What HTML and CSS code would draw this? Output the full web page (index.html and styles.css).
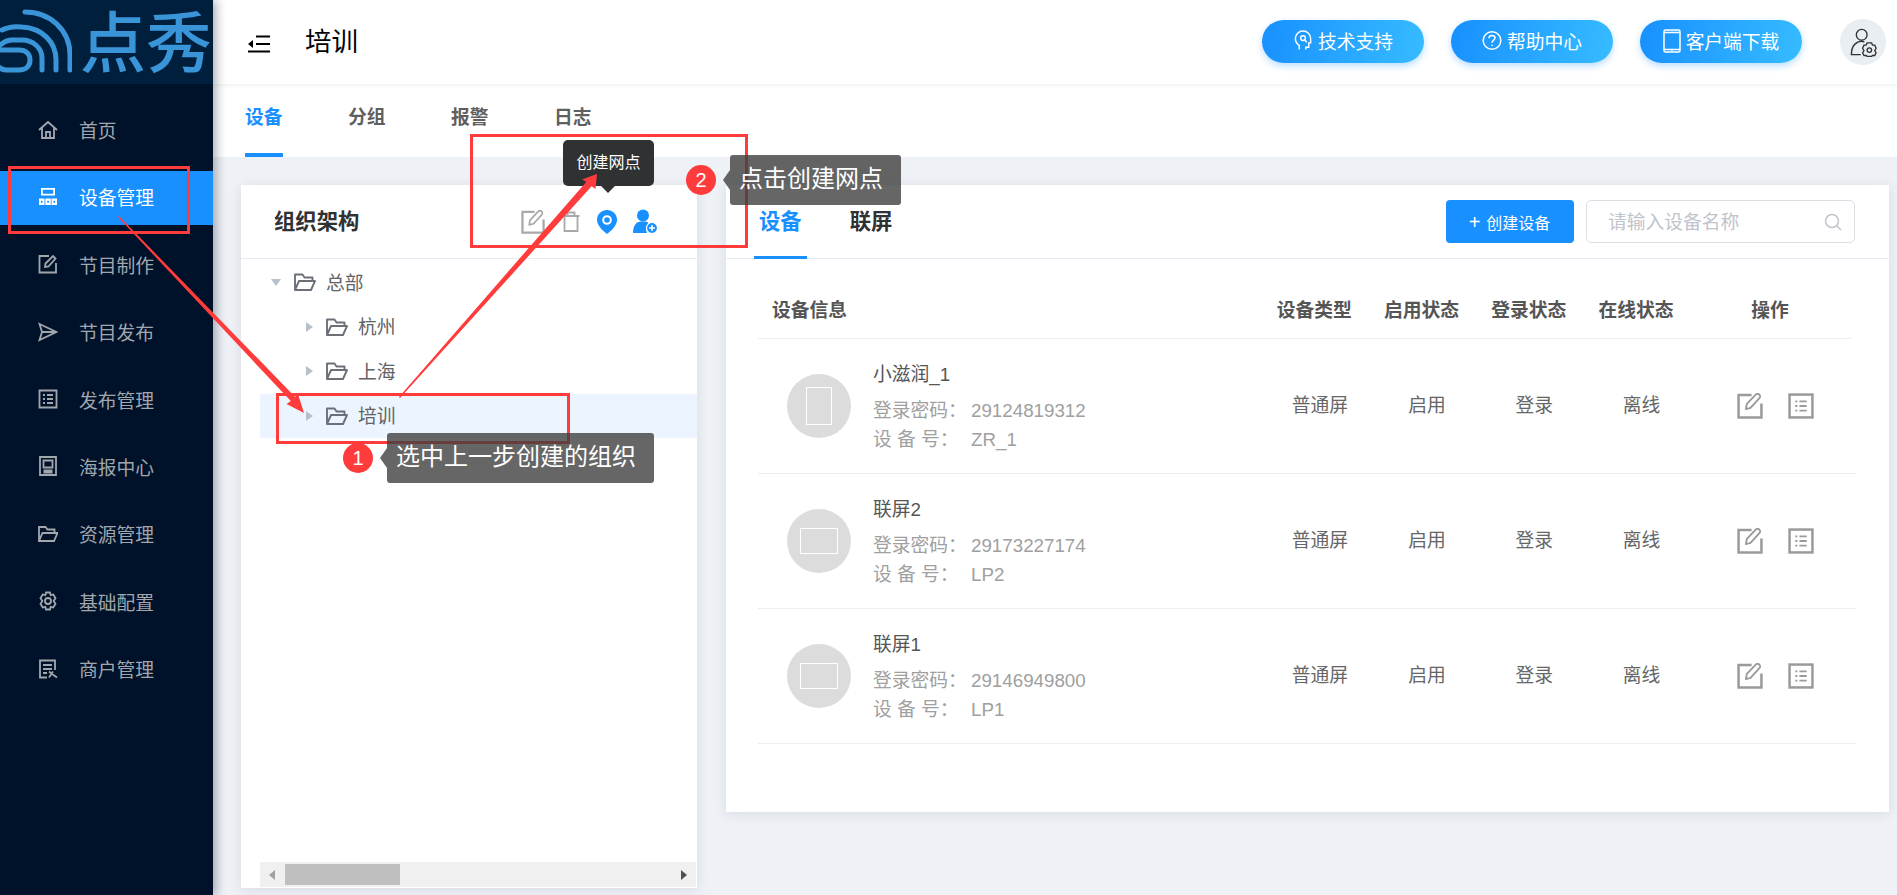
FILE: index.html
```html
<!DOCTYPE html>
<html lang="zh-CN">
<head>
  <meta charset="UTF-8">
  <title>点秀 - 设备管理</title>
  <link rel="stylesheet" href="styles.css">
</head>
<body>
  <svg class="defs" aria-hidden="true">
    <symbol id="i-edit" viewBox="0 0 25 25">
      <path d="M14 2H1.500V23.500H23.500V10" fill="none" stroke="currentColor" stroke-width="2.400"/>
      <path d="M8.500 15.500L9.500 10.500L18 1.500C19 .5 20.500 .5 21.500 1.500C22.500 2.500 22.500 4 21.500 5L13 14.300Z" fill="none" stroke="currentColor" stroke-width="1.800" stroke-linejoin="round"/>
    </symbol>
    <symbol id="i-list" viewBox="0 0 25 25">
      <rect x="1.500" y="1.500" width="22" height="22" fill="none" stroke="currentColor" stroke-width="2.400"/>
      <path d="M7 8h2M7 12.500h2M7 17h2M11 8h7M11 12.500h7M11 17h7" stroke="currentColor" stroke-width="1.700"/>
    </symbol>
    <symbol id="i-folder" viewBox="0 0 22 18">
      <path d="M1 17V1.500H8.500L10.500 4.500H18.500V8M1 17L5 8H21L17 17Z" fill="none" stroke="currentColor" stroke-width="1.900" stroke-linejoin="round"/>
    </symbol>
  </svg>

  <aside class="sidebar">
    <div class="logo">
      <svg class="logo-mark" viewBox="0 0 72 84">
        <g fill="none" stroke="#3a95d8" stroke-width="5" stroke-linecap="round">
          <path d="M25 12C50 12 70 30 70 55V70"/>
          <path d="M2 30C8 27 14 26 22 27C42 28 56 42 56 60V70"/>
          <path d="M42 70V58C42 48 33 40 22 40H12C6 40 2 43 -2 47"/>
          <path d="M1 50H19C26 50 30 54 30 60C30 66 26 70 19 70H6C2 70 0 68 -3 66"/>
        </g>
      </svg>
      <span class="logo-text">点秀</span>
    </div>
    <nav class="menu">
      <a class="menu-item">
        <svg class="menu-icon" viewBox="0 0 20 20"><path d="M1 10L10 2L19 10M4 8V18H16V8M8 18V12H12V18"/></svg>
        <span>首页</span>
      </a>
      <a class="menu-item active">
        <svg class="menu-icon solid" viewBox="0 0 20 20"><path d="M3 1h14v7.500H3zM4.800 2.800v3.900h10.400V2.800zM1 11.500h5.500V18H1zM3 13.800v2h1.500v-2zM7.300 11.500h5.500V18H7.300zM9.300 13.800v2h1.500v-2zM13.500 11.500H19V18h-5.500zM15.500 13.800v2H17v-2z"/></svg>
        <span>设备管理</span>
      </a>
      <a class="menu-item">
        <svg class="menu-icon" viewBox="0 0 20 20"><path d="M11 2H1.500V18.500H18V9M7 13L7.500 9.500L15 2L17.500 4.500L10.500 12.500Z"/></svg>
        <span>节目制作</span>
      </a>
      <a class="menu-item">
        <svg class="menu-icon" viewBox="0 0 20 20"><path d="M1.500 2L18.500 10L1.500 18L4 10ZM4 10H18.500"/></svg>
        <span>节目发布</span>
      </a>
      <a class="menu-item">
        <svg class="menu-icon" viewBox="0 0 20 20"><path d="M1.500 1.500H18.500V18.500H1.500ZM5 6h2M5 10h2M5 14h2M9 6h6M9 10h6M9 14h6"/></svg>
        <span>发布管理</span>
      </a>
      <a class="menu-item">
        <svg class="menu-icon" viewBox="0 0 20 20"><path d="M2 1H18V19H2ZM5.500 4.500H14.500V11.500H5.500ZM5.500 14.500H14.500M5.500 16.500H14.500"/></svg>
        <span>海报中心</span>
      </a>
      <a class="menu-item">
        <svg class="menu-icon" viewBox="0 0 20 20"><path d="M1 17V3H7.500L9.500 5.500H16.500V9M1 17L4.500 9H19.500L16 17Z"/></svg>
        <span>资源管理</span>
      </a>
      <a class="menu-item">
        <svg class="menu-icon" viewBox="0 0 20 20"><path d="M8 1.500H12L12.700 4.200L15.300 3.500L17.500 7.300L15.600 10L17.500 12.700L15.300 16.500L12.700 15.800L12 18.500H8L7.300 15.800L4.700 16.500L2.500 12.700L4.400 10L2.500 7.300L4.700 3.500L7.300 4.200Z"/><circle cx="10" cy="10" r="3"/></svg>
        <span>基础配置</span>
      </a>
      <a class="menu-item">
        <svg class="menu-icon" viewBox="0 0 20 20"><path d="M9 18.500H2V1.500H17V11M5 6H14M5 10H14M5 14H9M11 12.500C14 15 16 16.500 19 18.500M15 12.500L11 18.500"/></svg>
        <span>商户管理</span>
      </a>
    </nav>
  </aside>

  <div class="main">
    <header class="topbar">
      <svg class="toggle" viewBox="0 0 22 18">
        <path d="M8 1.500H22M8 9H22M0 16.500H22" stroke="#000" stroke-width="2.200"/>
        <path d="M0 9L5 5V13Z" fill="#000"/>
      </svg>
      <h1 class="page-title">培训</h1>
      <div class="top-actions">
        <a class="pill">
          <svg class="pill-icon" viewBox="0 0 18 22"><path d="M5 20.500V16C2.500 14.500 1 12 1 9C1 4.500 4.500 1 9 1C13.500 1 17 4.500 17 9V13.500H15V18H12V20.500"/><circle cx="9" cy="8.500" r="2.500"/><path d="M11 10.500L13 13"/></svg>
          技术支持
        </a>
        <a class="pill">
          <svg class="pill-icon" viewBox="0 0 20 20"><circle cx="10" cy="10" r="8.800"/><path d="M7 7.700C7 5.900 8.300 5 10 5C11.700 5 13 6 13 7.500C13 9.500 10 9.800 10 12.300"/><path d="M10 14.300V15.500"/></svg>
          帮助中心
        </a>
        <a class="pill">
          <svg class="pill-icon phone" viewBox="0 0 18 24"><rect x="1" y="1" width="16" height="22" rx="1.500"/><path d="M1 3.500H17M1 20.500H17M9 21.500V22"/></svg>
          客户端下载
        </a>
        <div class="avatar">
          <svg viewBox="0 0 30 32" class="avatar-icon">
            <circle cx="13" cy="8" r="6"/>
            <path d="M16 16C14 15 11 15 9 16C4 18 1.500 23 1.500 30H12"/>
            <path d="M19 17H24L25 19.500L27.500 19.500L29 23L27.500 25.500L29 28L27.500 31H25L24 32H19L18 31H15.500L14 28L15.500 25.500L14 23L15.500 19.500H18Z" fill="#e8eef1"/>
            <circle cx="21.500" cy="25" r="2.500"/>
          </svg>
        </div>
      </div>
    </header>

    <div class="tabbar">
      <a class="tab active">设备</a>
      <a class="tab">分组</a>
      <a class="tab">报警</a>
      <a class="tab">日志</a>
    </div>

    <div class="content">
      <section class="card org-card">
        <div class="card-head org-head">
          <h2 class="card-title">组织架构</h2>
          <div class="org-tools">
            <svg class="tool gray"><use href="#i-edit"/></svg>
            <svg class="tool gray trash" viewBox="0 0 20 21">
              <path d="M1.500 5H18.500M3.500 5V20H16.500V5M6.500 5V1.500H13.500V5" fill="none" stroke="currentColor" stroke-width="1.800"/>
            </svg>
            <svg class="tool blue pin" viewBox="0 0 20 24">
              <path d="M10 0C4.500 0 0 4.300 0 9.700C0 15.500 6 21 10 24C14 21 20 15.500 20 9.700C20 4.300 15.500 0 10 0Z" fill="currentColor"/>
              <circle cx="10" cy="10" r="3.800" fill="none" stroke="#fff" stroke-width="2"/>
            </svg>
            <svg class="tool blue user" viewBox="0 0 25 25">
              <circle cx="10" cy="6.500" r="6" fill="currentColor"/>
              <path d="M0 24C0 17 3 12.500 8 12.500H12C15 12.500 16 14 15 15C13 17 12.500 21 14 24Z" fill="currentColor"/>
              <circle cx="19" cy="19" r="5.500" fill="currentColor" stroke="#fff" stroke-width="1.200"/>
              <path d="M16 19H22M19 16V22" stroke="#fff" stroke-width="1.500"/>
            </svg>
          </div>
        </div>
        <div class="tree">
          <div class="tree-row">
            <span class="caret down"></span>
            <svg class="folder"><use href="#i-folder"/></svg>
            <span class="tree-label">总部</span>
          </div>
          <div class="tree-row child">
            <span class="caret"></span>
            <svg class="folder"><use href="#i-folder"/></svg>
            <span class="tree-label">杭州</span>
          </div>
          <div class="tree-row child">
            <span class="caret"></span>
            <svg class="folder"><use href="#i-folder"/></svg>
            <span class="tree-label">上海</span>
          </div>
          <div class="tree-row child selected">
            <span class="caret"></span>
            <svg class="folder"><use href="#i-folder"/></svg>
            <span class="tree-label">培训</span>
          </div>
        </div>
        <div class="hscroll">
          <span class="hscroll-arrow left"></span>
          <span class="hscroll-thumb"></span>
          <span class="hscroll-arrow right"></span>
        </div>
      </section>

      <section class="card device-card">
        <div class="card-head device-head">
          <div class="inner-tabs">
            <a class="inner-tab active">设备</a>
            <a class="inner-tab">联屏</a>
          </div>
          <button class="create-btn"><span class="plus">+</span>创建设备</button>
          <div class="search">
            <input class="search-input" placeholder="请输入设备名称">
            <svg class="search-icon" viewBox="0 0 18 18"><circle cx="8" cy="8" r="6.500"/><path d="M13 13L17 17"/></svg>
          </div>
        </div>

        <div class="table">
          <div class="table-head">
            <div class="col-info">设备信息</div>
            <div>设备类型</div>
            <div>启用状态</div>
            <div>登录状态</div>
            <div>在线状态</div>
            <div>操作</div>
          </div>

          <div class="table-row">
            <div class="col-info device">
              <div class="thumb"><span class="screen portrait"></span></div>
              <div class="device-text">
                <div class="device-name">小滋润_1</div>
                <div class="device-meta"><span class="meta-label">登录密码：</span>29124819312</div>
                <div class="device-meta"><span class="meta-label">设 备 号：</span>ZR_1</div>
              </div>
            </div>
            <div class="cell">普通屏</div>
            <div class="cell">启用</div>
            <div class="cell">登录</div>
            <div class="cell">离线</div>
            <div class="row-ops">
              <svg class="op"><use href="#i-edit"/></svg>
              <svg class="op"><use href="#i-list"/></svg>
            </div>
          </div>

          <div class="table-row">
            <div class="col-info device">
              <div class="thumb"><span class="screen landscape"></span></div>
              <div class="device-text">
                <div class="device-name">联屏2</div>
                <div class="device-meta"><span class="meta-label">登录密码：</span>29173227174</div>
                <div class="device-meta"><span class="meta-label">设 备 号：</span>LP2</div>
              </div>
            </div>
            <div class="cell">普通屏</div>
            <div class="cell">启用</div>
            <div class="cell">登录</div>
            <div class="cell">离线</div>
            <div class="row-ops">
              <svg class="op"><use href="#i-edit"/></svg>
              <svg class="op"><use href="#i-list"/></svg>
            </div>
          </div>

          <div class="table-row">
            <div class="col-info device">
              <div class="thumb"><span class="screen landscape"></span></div>
              <div class="device-text">
                <div class="device-name">联屏1</div>
                <div class="device-meta"><span class="meta-label">登录密码：</span>29146949800</div>
                <div class="device-meta"><span class="meta-label">设 备 号：</span>LP1</div>
              </div>
            </div>
            <div class="cell">普通屏</div>
            <div class="cell">启用</div>
            <div class="cell">登录</div>
            <div class="cell">离线</div>
            <div class="row-ops">
              <svg class="op"><use href="#i-edit"/></svg>
              <svg class="op"><use href="#i-list"/></svg>
            </div>
          </div>
        </div>
      </section>
    </div>
  </div>

  <!-- tutorial annotations drawn over the page -->
  <div class="tooltip">创建网点</div>

  <span class="mark mark-menu"></span>
  <span class="mark mark-tree"></span>
  <span class="mark mark-tools"></span>

  <svg class="arrows" viewBox="0 0 1897 895">
    <polygon points="118,217 119,216 295.200,396.900 297.700,393 304,413 286.500,404 290.800,401.100"/>
    <polygon points="400,398 399,397 586.400,181.700 582,179.500 597,174 595.500,189 591.600,186.300"/>
  </svg>

  <span class="step step-one">1</span>
  <div class="callout callout-one">选中上一步创建的组织</div>
  <span class="step step-two">2</span>
  <div class="callout callout-two">点击创建网点</div>
</body>
</html>
```

FILE: styles.css
```css
* {
  box-sizing: border-box;
}

html, body {
  margin: 0;
  height: 100%;
}

body {
  display: flex;
  height: 895px;
  overflow: hidden;
  background: #eef1f5;
  color: #606266;
  font-family: "Liberation Sans", "Noto Sans CJK SC", sans-serif;
  font-size: 18.75px;
}

.defs {
  position: absolute;
  width: 0;
  height: 0;
}

/* Sidebar */
.sidebar {
  position: relative;
  z-index: 3;
  flex: 0 0 213px;
  min-width: 0;
  background: #001229;
  box-shadow: 3px 0 10px rgba(0, 21, 41, 0.35);
}

.logo {
  display: flex;
  height: 84px;
  overflow: hidden;
  background: #001f3d;
}

.logo-mark {
  flex: 0 0 72px;
  width: 72px;
  height: 84px;
  margin-right: 8px;
  overflow: hidden;
}

.logo-text {
  color: #3a95d8;
  font-size: 66px;
  font-weight: 500;
  line-height: 88px;
  white-space: nowrap;
}

.menu {
  display: flex;
  flex-direction: column;
  gap: 13.4px;
  padding-top: 20px;
}

.menu-item {
  display: flex;
  align-items: center;
  gap: 21px;
  height: 54px;
  padding: 0 0 3px 38px;
  color: #a2a7ae;
}

.menu-item.active {
  background: #1890ff;
  color: #fff;
}

.menu-icon {
  width: 20px;
  height: 20px;
  fill: none;
  stroke: currentColor;
  stroke-width: 1.800;
}

.menu-icon.solid {
  fill: currentColor;
  fill-rule: evenodd;
  stroke: none;
}

/* Top bar */
.main {
  flex: 1;
  min-width: 0;
  display: flex;
  flex-direction: column;
}

.topbar {
  position: relative;
  z-index: 2;
  display: flex;
  align-items: center;
  height: 84px;
  padding: 0 11px 0 35px;
  background: #fff;
  box-shadow: 0 1px 4px rgba(0, 21, 41, 0.08);
}

.toggle {
  width: 22px;
  height: 18px;
  margin-top: 4px;
}

.page-title {
  margin: 0 0 0 35px;
  padding-bottom: 5px;
  color: #000;
  font-size: 26.500px;
  font-weight: 400;
}

.top-actions {
  display: flex;
  align-items: center;
  gap: 27px;
  margin-left: auto;
  padding-bottom: 1px;
}

.pill {
  display: flex;
  align-items: center;
  justify-content: center;
  gap: 5px;
  width: 162px;
  height: 43px;
  padding-bottom: 2px;
  border-radius: 22px;
  background: linear-gradient(100deg, #1890ff, #36bcff);
  box-shadow: 0 3px 7px rgba(24, 144, 255, 0.3);
  color: #fff;
  white-space: nowrap;
}

.pill-icon {
  width: 20px;
  height: 21px;
  fill: none;
  stroke: #fff;
  stroke-width: 1.500;
}

.pill-icon.phone {
  width: 18px;
  height: 24px;
}

.avatar {
  display: flex;
  align-items: center;
  justify-content: center;
  width: 46px;
  height: 46px;
  margin-left: 11px;
  border-radius: 50%;
  background: #e8eef1;
}

.avatar-icon {
  width: 27px;
  height: 30px;
  fill: none;
  stroke: #333;
  stroke-width: 1.500;
}

/* Page tabs */
.tabbar {
  display: flex;
  gap: 65.500px;
  height: 73px;
  padding-left: 32px;
  background: #fff;
}

.tab {
  display: flex;
  align-items: center;
  height: 73px;
  padding-bottom: 6px;
  border-bottom: 4px solid transparent;
  color: #5f5f5f;
  font-weight: 700;
}

.tab.active {
  border-bottom-color: #1890ff;
  color: #1890ff;
}

/* Cards */
.content {
  flex: 1;
  display: flex;
  align-items: flex-start;
  gap: 29px;
  padding: 28px 8px 0 28px;
}

.card {
  background: #fff;
  box-shadow: 0 2px 12px rgba(30, 50, 90, 0.1);
}

.card-head {
  display: flex;
  align-items: center;
  height: 74px;
  border-bottom: 1px solid #e6ebf5;
}

.card-title {
  margin: 0;
  padding-bottom: 5px;
  color: #303133;
  font-size: 21.330px;
  font-weight: 700;
}

/* Organisation tree */
.org-card {
  position: relative;
  flex: 0 0 456px;
  height: 703px;
}

.org-head {
  padding-left: 33px;
}

.org-tools {
  display: flex;
  align-items: center;
  gap: 16px;
  margin-left: auto;
  margin-right: 39px;
}

.tool {
  width: 24px;
  height: 24px;
}

.tool.gray {
  color: #a9a9a9;
}

.tool.blue {
  color: #1890ff;
}

.tool.trash {
  width: 20px;
  height: 21px;
}

.tool.pin {
  width: 20px;
  height: 24px;
}

.tool.user {
  width: 25px;
  height: 25px;
}

.tree {
  margin: 1px 0 0 19px;
}

.tree-row {
  display: flex;
  align-items: center;
  height: 44.500px;
  padding-left: 11px;
}

.tree-row.child {
  padding-left: 46px;
}

.tree-row.selected {
  background: #ecf5ff;
}

.tree-label {
  padding-bottom: 2px;
}

.caret {
  width: 0;
  height: 0;
  margin-right: 13px;
  border-style: solid;
  border-width: 5.500px 0 5.500px 7px;
  border-color: transparent transparent transparent #b8c0cc;
}

.caret.down {
  margin-right: 13px;
  border-width: 7px 5.500px 0;
  border-color: #b8c0cc transparent transparent;
}

.folder {
  width: 22px;
  height: 18px;
  margin-right: 10px;
  color: #6b7078;
}

.hscroll {
  position: absolute;
  left: 19px;
  right: 1px;
  bottom: 1px;
  display: flex;
  align-items: center;
  height: 25px;
  background: #f0f0f0;
}

.hscroll-arrow {
  width: 0;
  height: 0;
  border-style: solid;
}

.hscroll-arrow.left {
  margin-left: 9px;
  border-width: 5.500px 6px 5.500px 0;
  border-color: transparent #a0a0a0 transparent transparent;
}

.hscroll-arrow.right {
  margin-left: auto;
  margin-right: 9px;
  border-width: 5.500px 0 5.500px 6px;
  border-color: transparent transparent transparent #505050;
}

.hscroll-thumb {
  width: 115px;
  height: 21px;
  margin-left: 10px;
  background: #bfbfbf;
}

/* Device list */
.device-card {
  flex: 1;
  height: 627px;
}

.device-head {
  padding-right: 34px;
}

.inner-tabs {
  display: flex;
  align-self: stretch;
  gap: 38px;
  margin-left: 28px;
  margin-right: auto;
}

.inner-tab {
  display: flex;
  align-items: center;
  height: 74px;
  padding: 0 5px 2px;
  border-bottom: 3px solid transparent;
  color: #303133;
  font-size: 21.330px;
  font-weight: 700;
}

.inner-tab.active {
  border-bottom-color: #1890ff;
  color: #1890ff;
}

.create-btn {
  display: flex;
  align-items: center;
  justify-content: center;
  gap: 6px;
  width: 128px;
  height: 43px;
  border: 0;
  border-radius: 4px;
  background: #1890ff;
  color: #fff;
  font-family: inherit;
  font-size: 16px;
}

.plus {
  font-size: 20px;
  line-height: 1;
}

.search {
  position: relative;
  width: 269px;
  height: 43px;
  margin-left: 12.500px;
}

.search-input {
  width: 100%;
  height: 100%;
  padding: 2px 50px 0 21px;
  border: 1px solid #dcdfe6;
  border-radius: 5px;
  font-family: inherit;
  font-size: 18.750px;
}

.search-input::placeholder {
  color: #c0c4cc;
}

.search-icon {
  position: absolute;
  top: 13px;
  right: 13px;
  width: 18px;
  height: 18px;
  fill: none;
  stroke: #c0c4cc;
  stroke-width: 1.500;
}

.table {
  margin: 21px 33px 0 32px;
}

.table-head,
.table-row {
  display: grid;
  grid-template-columns: 1fr repeat(4, 107.200px) 161px;
  align-items: center;
  text-align: center;
}

.table-head {
  height: 59px;
  margin-right: 5.500px;
  padding-bottom: 2px;
  border-bottom: 1px solid #ebeef5;
  color: #555;
  font-weight: 700;
}

.table-row {
  height: 135px;
  border-bottom: 1px solid #ebeef5;
  color: #666;
}

.cell {
  padding-bottom: 5px;
}

.col-info {
  padding-left: 14px;
  text-align: left;
}

.device {
  display: flex;
  align-items: center;
  gap: 22px;
  padding-left: 29px;
}

.thumb {
  display: flex;
  align-items: center;
  justify-content: center;
  flex: 0 0 64px;
  height: 64px;
  border-radius: 50%;
  background: #dcdcdc;
}

.screen {
  border: 1px solid #fff;
}

.screen.portrait {
  width: 26px;
  height: 38px;
}

.screen.landscape {
  width: 38px;
  height: 26px;
}

.device-text {
  padding-top: 2px;
}

.device-name {
  margin-bottom: 7px;
  color: #555;
  line-height: 29px;
}

.device-meta {
  color: #a0a0a0;
  line-height: 29px;
}

.meta-label {
  display: inline-block;
  width: 98px;
}

.row-ops {
  display: flex;
  justify-content: center;
  gap: 25px;
}

.op {
  width: 26px;
  height: 26px;
  color: #9a9a9a;
}

/* Annotations */
.tooltip {
  position: absolute;
  z-index: 6;
  left: 563px;
  top: 140px;
  width: 91px;
  height: 46px;
  border-radius: 5px;
  background: #303133;
  color: #fff;
  font-size: 16px;
  line-height: 46px;
  text-align: center;
}

.tooltip::after {
  content: "";
  position: absolute;
  left: 38px;
  top: 46px;
  border-style: solid;
  border-width: 7px 7.500px 0;
  border-color: #303133 transparent transparent;
}

.mark {
  position: absolute;
  z-index: 7;
  border: 3px solid #ff3b3b;
}

.mark-menu {
  left: 8px;
  top: 166px;
  width: 182px;
  height: 68px;
}

.mark-tree {
  left: 276px;
  top: 393px;
  width: 294px;
  height: 51px;
}

.mark-tools {
  left: 470px;
  top: 134px;
  width: 278px;
  height: 114px;
}

.arrows {
  position: absolute;
  z-index: 8;
  left: 0;
  top: 0;
  width: 1897px;
  height: 895px;
  fill: #ff3b3b;
  pointer-events: none;
}

.step {
  position: absolute;
  z-index: 9;
  width: 30px;
  height: 30px;
  border-radius: 50%;
  background: #ff3b3b;
  color: #fff;
  font-size: 20px;
  line-height: 30px;
  text-align: center;
}

.step-one {
  left: 343px;
  top: 443px;
}

.step-two {
  left: 686px;
  top: 165px;
}

.callout {
  position: absolute;
  z-index: 9;
  height: 50px;
  padding: 0 9px;
  border-radius: 3px;
  background: rgba(64, 64, 64, 0.8);
  color: #fff;
  font-size: 24px;
  line-height: 47px;
  white-space: nowrap;
}

.callout::before {
  content: "";
  position: absolute;
  left: -7px;
  top: 15px;
  border-style: solid;
  border-width: 10px 7px 10px 0;
  border-color: transparent rgba(64, 64, 64, 0.8) transparent transparent;
}

.callout-one {
  left: 387px;
  top: 433px;
  width: 267px;
}

.callout-two {
  left: 730px;
  top: 155px;
  width: 171px;
}
```
